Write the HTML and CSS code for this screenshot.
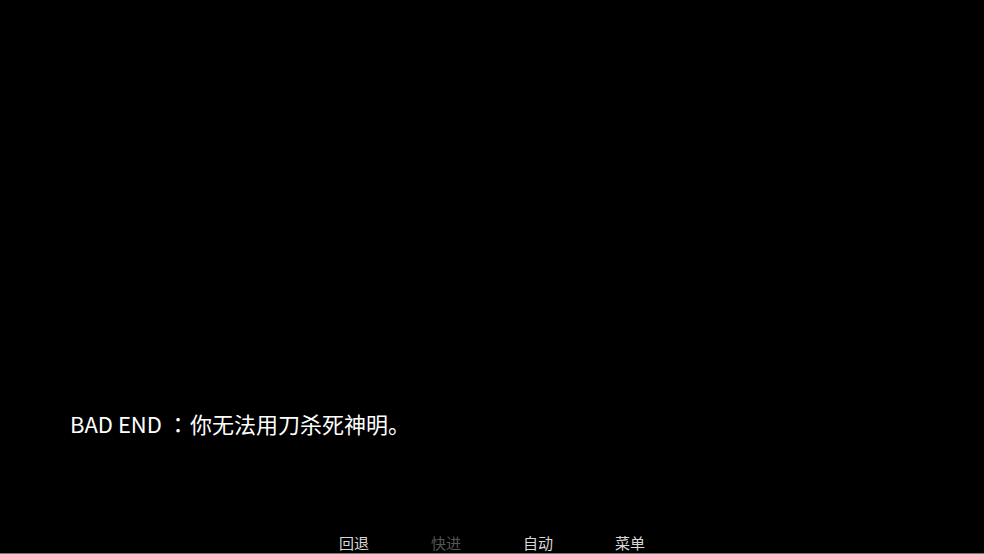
FILE: index.html
```html
<!DOCTYPE html>
<html lang="zh-CN">
<head>
    <meta charset="UTF-8">
    <meta name="viewport" content="width=device-width, initial-scale=1.0">
    <title>BAD END</title>
    <link rel="stylesheet" href="styles.css">
</head>
<body>
    <div class="screen">
        <div class="say">BAD END<span class="colon" lang="ja">：</span>你无法用刀杀死神明。</div>

        <div class="quick-menu">
            <span class="qm-btn">回退</span>
            <span class="qm-btn off">快进</span>
            <span class="qm-btn">自动</span>
            <span class="qm-btn">菜单</span>
        </div>
    </div>
</body>
</html>
```

FILE: styles.css
```css
html, body {
    margin: 0;
    background: #000;
}
body {
    font-family: "Noto Sans CJK SC", "Noto Sans", sans-serif;
    color: #fff;
}
.screen {
    height: 553px;
    border-bottom: 1px solid #7a7a7a;
    display: flex;
    flex-direction: column;
    justify-content: flex-end;
    overflow: hidden;
}
.say {
    padding-left: 70px;
    font-size: 22px;
    line-height: 30px;
    margin-bottom: 95px;
}
/* centred full-width colon */
.colon {
    font-family: "Noto Sans CJK JP", sans-serif;
    margin-left: 5px;
    margin-right: 1px;
}
.quick-menu {
    display: flex;
    justify-content: center;
    height: 20px;
}
.qm-btn {
    width: 92px;
    text-align: center;
    font-size: 15px;
    line-height: 20px;
    color: #d8d8d8;
}
.qm-btn.off {
    color: #555;
}
```
